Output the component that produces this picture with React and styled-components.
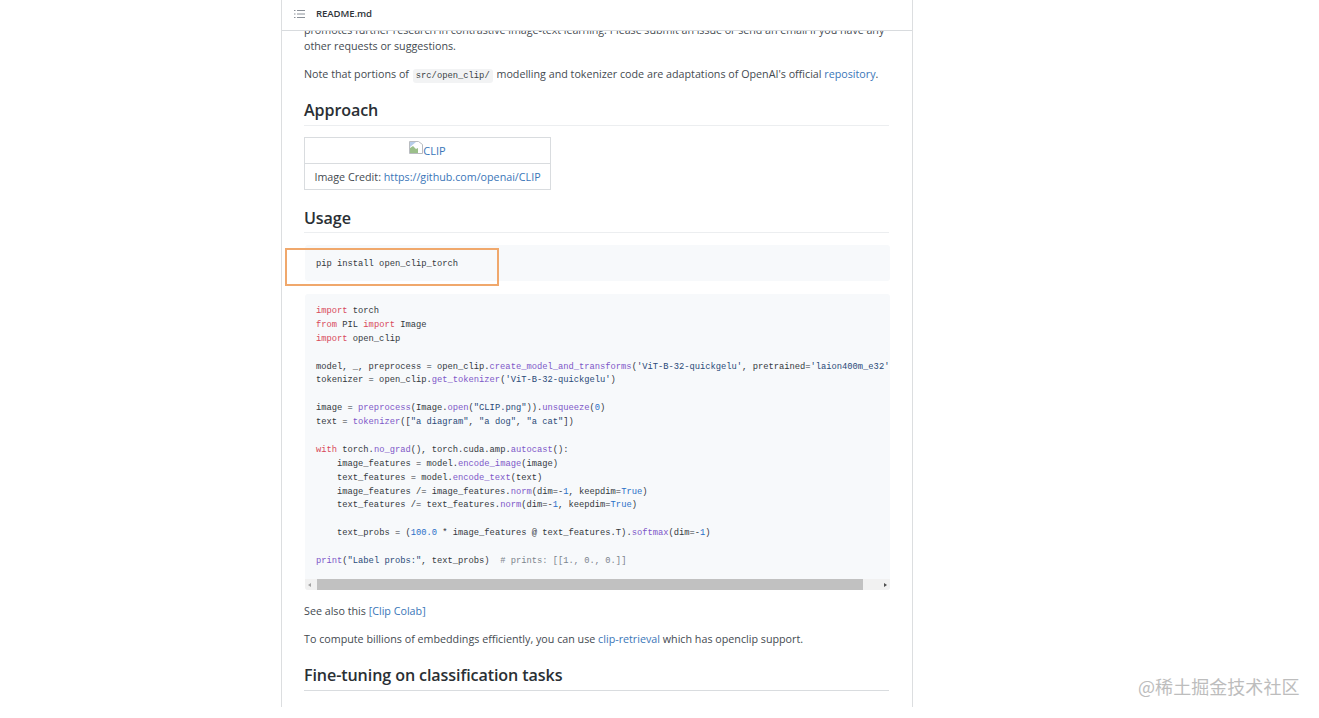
import React from "react";
import styled, { createGlobalStyle } from "styled-components";

const Global = createGlobalStyle`
  html, body { margin: 0; padding: 0; background: #fff; }
  body { font-family: "Open Sans", "Noto Sans", sans-serif; color: #24292e; }
`;
const Page = styled.div`
  position: relative; width: 1319px; height: 718px; overflow: hidden; background: #fff;
`;
const Card = styled.div`
  box-sizing: border-box; width: 632px; height: 707px; margin-left: 281px;
  border-left: 1px solid #dcdee0; border-right: 1px solid #dcdee0;
  display: flex; flex-direction: column; overflow: hidden;
`;
const Bar = styled.div`
  flex: none; box-sizing: border-box; height: 31px; display: flex; align-items: center; gap: 11px;
  padding: 0 0 3px 12px; border-bottom: 1px solid #d8dbde; background: #fff; position: relative; z-index: 1;
`;
const BarTitle = styled.span`font-size: 9.6px; font-weight: 600; color: #2f3439; letter-spacing: -0.1px;`;
const Body = styled.div`
  flex: 1; min-height: 0; padding: 0 23px 0 22px; margin-top: -8px; font-size: 10.72px; line-height: 14px; color: #444a50;
`;
const Para = styled.p`
  margin: ${p => p.$top ?? 0}px 0 0; white-space: nowrap;
  ${p => p.$tight && "letter-spacing: -0.045px;"}
`;
const A = styled.span`color: #3a76b8;`;
const InlineCode = styled.code`
  font-family: "Liberation Mono", monospace; font-size: 8.8px; background: #f2f3f4; padding: 2px 3px; border-radius: 3px; margin: 0 1px; color: #3a3f44;
`;
const Heading = styled.h2`
  margin: ${p => p.$top}px 0 0; padding-bottom: ${p => p.$pad ?? 4}px; font-size: 16.1px; line-height: 22px; font-weight: 600;
  color: #2a2f34; border-bottom: 1px solid ${p => p.$line ?? "#eceef0"}; letter-spacing: -0.1px;
`;
const Table = styled.div`
  box-sizing: border-box; width: 247px; margin-top: 11px; border: 1px solid #d9dcdf; display: flex; flex-direction: column;
`;
const Cell = styled.div`
  height: ${p => p.$h}px; display: flex; align-items: center; justify-content: center; white-space: nowrap;
  ${p => p.$line && "border-top: 1px solid #d9dcdf;"}
`;
const ClipLink = styled.span`
  display: inline-flex; align-items: flex-end; color: #3a76b8; font-size: 11px; margin-bottom: 2px;
`;
const CodeBlock = styled.div`
  box-sizing: border-box; margin-top: ${p => p.$top}px; height: ${p => p.$h}px; background: #f7f9fb; border-radius: 3px;
  position: relative; overflow: hidden; width: 585px; margin-left: 1px;
`;
const Pre = styled.pre`
  margin: 0; padding: ${p => p.$top}px 0 0 11px; font-family: "Liberation Mono", monospace; font-size: 8.78px; line-height: 13.89px; color: #33383d;
`;
const Kw = styled.span`color: #d7485a;`;
const Fn = styled.span`color: #7d57c8;`;
const Str = styled.span`color: #2a4a78;`;
const Num = styled.span`color: #2a70c8;`;
const Com = styled.span`color: #7c848d;`;
const Scroll = styled.div`
  position: absolute; left: 0; right: 0; bottom: 0; height: 11px; background: #f1f1f1; display: flex; align-items: center; padding: 0 3px; box-sizing: border-box;
`;
const Thumb = styled.div`margin-left: 6px; width: 546px; height: 100%; background: #c1c1c1;`;
const Arrow = styled.div`
  width: 0; height: 0; border-top: 2.5px solid transparent; border-bottom: 2.5px solid transparent;
  ${p => p.$right ? "margin-left: auto; border-left: 3px solid #505050;" : "border-right: 3px solid #a3a3a3;"}
`;
const Highlight = styled.div`
  position: absolute; left: 285px; top: 248px; width: 214px; height: 38px; box-sizing: border-box; border: 2px solid #f0a86c;
`;
const Watermark = styled.div`
  position: absolute; left: 1138px; top: 674px; font-family: "Noto Sans CJK SC", "Noto Sans", sans-serif; font-size: 18px; line-height: 24px;
  color: #bdbdbd; white-space: nowrap; letter-spacing: 0.05px;
`;

const ListIcon = () => (
  <svg width="11" height="10" viewBox="0 0 11 10" fill="none" stroke="#8a9098" strokeWidth="1">
    <path d="M3 1.5h8M3 5h8M3 8.5h8M0 1.5h1.5M0 5h1.5M0 8.5h1.5" />
  </svg>
);
const BrokenImage = () => (
  <svg width="14" height="13" viewBox="0 0 14 13" style={{ marginBottom: 4 }}>
    <path d="M.5.5h9l4 3v9h-13z" fill="#fff" stroke="#b9bcc0" />
    <path d="M1 7l3-2 3 3 2-1v5H1z" fill="#9bbf8a" />
    <path d="M1 1h6L1 6z" fill="#b7cdea" />
  </svg>
);

export default function App() {
  return (
    <Page>
      <Global />
      <Card>
        <Bar>
          <ListIcon />
          <BarTitle>README.md</BarTitle>
        </Bar>
        <Body>
          <Para $tight>promotes further research in contrastive image-text learning. Please submit an issue or send an email if you have any</Para>
          <Para $top={2}>other requests or suggestions.</Para>
          <Para $top={14}>
            Note that portions of <InlineCode>src/open_clip/</InlineCode> modelling and tokenizer code are adaptations of OpenAI's official <A>repository</A>.
          </Para>
          <Heading $top={16}>Approach</Heading>
          <Table>
            <Cell $h={25}><ClipLink><BrokenImage />CLIP</ClipLink></Cell>
            <Cell $h={25} $line>Image Credit:&nbsp;<A>https://github.com/openai/CLIP</A></Cell>
          </Table>
          <Heading $top={17} $pad={3}>Usage</Heading>
          <CodeBlock $top={12} $h={36}>
            <Pre $top={13}>pip install open_clip_torch</Pre>
          </CodeBlock>
          <CodeBlock $top={13} $h={296}>
            <Pre $top={11}>
<Kw>import</Kw> torch{"\n"}
<Kw>from</Kw> PIL <Kw>import</Kw> Image{"\n"}
<Kw>import</Kw> open_clip{"\n"}
{"\n"}
model, _, preprocess = open_clip.<Fn>create_model_and_transforms</Fn>(<Str>'ViT-B-32-quickgelu'</Str>, pretrained=<Str>'laion400m_e32'</Str>{"\n"}
tokenizer = open_clip.<Fn>get_tokenizer</Fn>(<Str>'ViT-B-32-quickgelu'</Str>){"\n"}
{"\n"}
image = <Fn>preprocess</Fn>(Image.<Fn>open</Fn>(<Str>"CLIP.png"</Str>)).<Fn>unsqueeze</Fn>(<Num>0</Num>){"\n"}
text = <Fn>tokenizer</Fn>([<Str>"a diagram"</Str>, <Str>"a dog"</Str>, <Str>"a cat"</Str>]){"\n"}
{"\n"}
<Kw>with</Kw> torch.<Fn>no_grad</Fn>(), torch.cuda.amp.<Fn>autocast</Fn>():{"\n"}
{"    "}image_features = model.<Fn>encode_image</Fn>(image){"\n"}
{"    "}text_features = model.<Fn>encode_text</Fn>(text){"\n"}
{"    "}image_features /= image_features.<Fn>norm</Fn>(dim=-<Num>1</Num>, keepdim=<Num>True</Num>){"\n"}
{"    "}text_features /= text_features.<Fn>norm</Fn>(dim=-<Num>1</Num>, keepdim=<Num>True</Num>){"\n"}
{"\n"}
{"    "}text_probs = (<Num>100.0</Num> * image_features @ text_features.T).<Fn>softmax</Fn>(dim=-<Num>1</Num>){"\n"}
{"\n"}
<Fn>print</Fn>(<Str>"Label probs:"</Str>, text_probs)  <Com># prints: [[1., 0., 0.]]</Com>
            </Pre>
            <Scroll>
              <Arrow />
              <Thumb />
              <Arrow $right />
            </Scroll>
          </CodeBlock>
          <Para $top={14}>See also this <A>[Clip Colab]</A></Para>
          <Para $top={14}>To compute billions of embeddings efficiently, you can use <A>clip-retrieval</A> which has openclip support.</Para>
          <Heading $top={18} $pad={4} $line="#d9dcdf">Fine-tuning on classification tasks</Heading>
          <Para $top={13}>This repository is focused on training CLIP models. To fine-tune a trained zero-shot</Para>
        </Body>
      </Card>
      <Highlight />
      <Watermark>@稀土掘金技术社区</Watermark>
    </Page>
  );
}
